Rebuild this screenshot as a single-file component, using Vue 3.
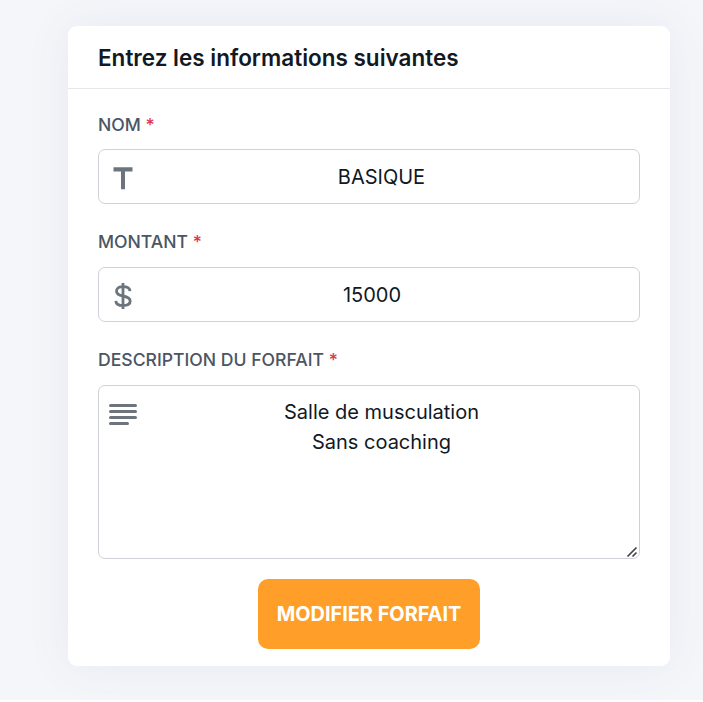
<script setup>
import { ref } from 'vue'

const nom = ref('BASIQUE')
const montant = ref('15000')
const description = ref('Salle de musculation\nSans coaching')
</script>

<template>
  <main class="page">
    <form class="card" @submit.prevent>
      <header class="card-header">
        <h5 class="title">Entrez les informations suivantes</h5>
      </header>
      <div class="card-body">
        <div class="group">
          <label class="label" for="nom">NOM <span class="required">*</span></label>
          <div class="control">
            <svg class="icon" viewBox="0 0 30 30" aria-hidden="true">
              <path d="M5.500 4.300h19v4.200H17v17.700h-4V8.500H5.500z" fill="currentColor" />
            </svg>
            <input id="nom" v-model="nom" class="input input-name" type="text" />
          </div>
        </div>
        <div class="group">
          <label class="label" for="montant">MONTANT <span class="required">*</span></label>
          <div class="control">
            <svg class="icon" viewBox="0 0 30 30" aria-hidden="true">
              <path d="M15 2v26M22 10.200C21.800 7.300 19.500 5.700 15 5.700c-4.200 0-6.500 1.700-6.500 4.500 0 3 2.300 4 6.500 4.800 4.800.9 7.200 2 7.200 5 0 2.900-2.600 4.500-7.200 4.500-4.500 0-7-1.700-7.200-4.700" fill="none" stroke="currentColor" stroke-width="2.800" />
            </svg>
            <input id="montant" v-model="montant" class="input" type="text" />
          </div>
        </div>
        <div class="group">
          <label class="label" for="description">DESCRIPTION DU FORFAIT <span class="required">*</span></label>
          <div class="control area">
            <svg class="icon" viewBox="0 0 30 30" aria-hidden="true">
              <path d="M2.500 5.500h25M2.500 11.500h25M2.500 17.500h25M2.500 23.500h17" fill="none" stroke="currentColor" stroke-width="3" stroke-linecap="round" />
            </svg>
            <textarea id="description" v-model="description" class="input textarea" spellcheck="false"></textarea>
            <svg class="grip" viewBox="0 0 12 12" aria-hidden="true">
              <path d="M1.500 10.500L10.500 1.500M6.500 10.500L10.500 6.500" fill="none" stroke="#444" stroke-width="1.700" />
            </svg>
          </div>
        </div>
        <button class="submit" type="submit">MODIFIER FORFAIT</button>
      </div>
    </form>
  </main>
</template>

<style>
body {
  margin: 0;
  background: #fff;
}
</style>

<style scoped>
* {
  box-sizing: border-box;
}
.page {
  height: 700px;
  padding: 26px 33px 34px 68px;
  overflow: hidden;
  background: #f5f6fa;
  font-family: Inter, sans-serif;
  color: #101924;
}
.card {
  display: flex;
  flex-direction: column;
  width: 602px;
  height: 640px;
  border-radius: 9px;
  background: #fff;
  box-shadow: 0 0 45px 0 rgba(75, 85, 130, 0.08);
}
.card-header {
  display: flex;
  align-items: center;
  height: 63px;
  padding: 0 30px;
  border-bottom: 1px solid #e5e7eb;
}
.title {
  margin: 0;
  padding-top: 2px;
  font-size: 22.500px;
  line-height: 30px;
  font-weight: 600;
}
.card-body {
  display: flex;
  flex-direction: column;
  padding: 21px 30px 0;
}
.group {
  margin-bottom: 23px;
}
.label {
  display: block;
  height: 30px;
  margin-bottom: 9px;
  font-size: 17.600px;
  line-height: 30px;
  font-weight: 500;
  color: #4b5563;
}
.group:nth-child(n + 2) .label {
  margin-bottom: 10px;
}
.required {
  color: #dc3545;
}
.control {
  position: relative;
  display: flex;
  height: 55px;
}
.icon {
  position: absolute;
  left: 10px;
  top: 14px;
  width: 30px;
  height: 30px;
  color: #6c757d;
}
.input {
  width: 100%;
  height: 100%;
  margin: 0;
  padding: 0 44px 0 50px;
  border: 1px solid #d1d1da;
  border-radius: 7px;
  outline: none;
  background: transparent;
  font-family: inherit;
  font-size: 20px;
  line-height: 30px;
  text-align: center;
  color: #101924;
}
.input-name {
  padding-top: 1px;
  padding-right: 25px;
}
.area {
  height: 174px;
}
.area .icon {
  top: 15px;
}
.textarea {
  padding: 11px 25px 11px 50px;
  resize: none;
}
.grip {
  position: absolute;
  right: 2px;
  bottom: 1px;
  width: 12px;
  height: 12px;
}
.submit {
  align-self: center;
  width: 222px;
  height: 70px;
  margin-top: -3px;
  padding: 0;
  border: 0;
  border-radius: 10px;
  background: #ff9f29;
  color: #fff;
  font-family: inherit;
  font-size: 19.900px;
  font-weight: 700;
}
</style>
